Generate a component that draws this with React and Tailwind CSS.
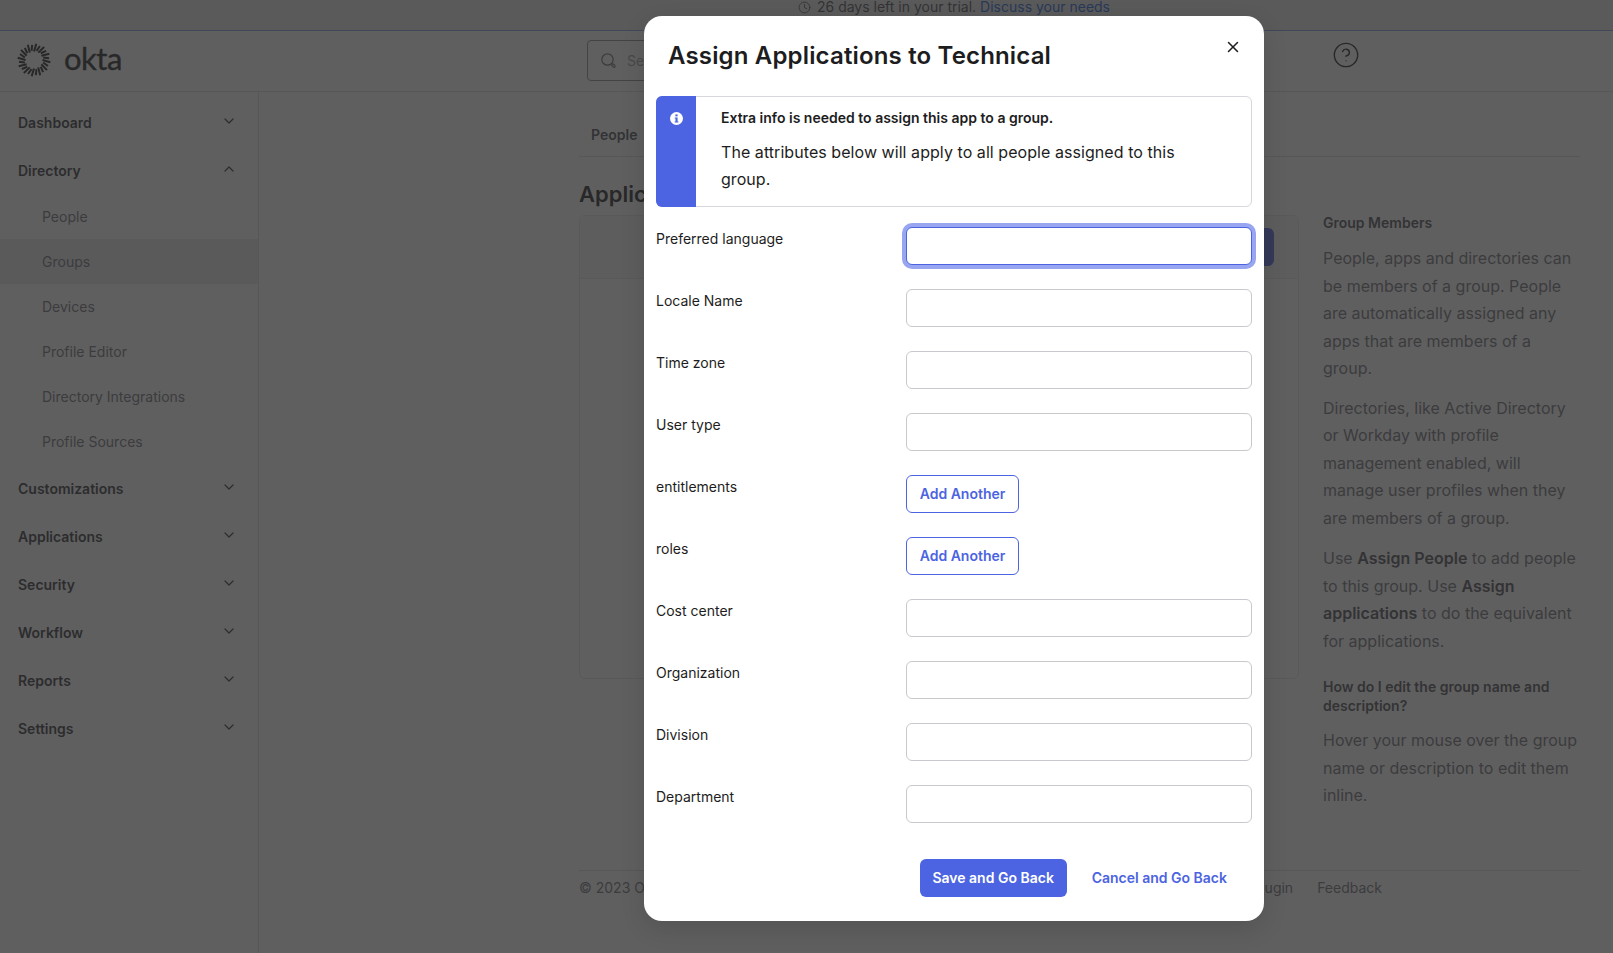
import React from "react";
import { ChevronDown, ChevronUp, X, Clock, CircleHelp } from "lucide-react";

function Burst() {
  const rays = [];
  for (let i = 0; i < 24; i++) {
    const a = (i / 24) * Math.PI * 2;
    const b = a + 0.14;
    const long = i % 2 === 0 ? 16.5 : 15.2;
    const short = i % 2 === 0 ? 8.5 : 9.5;
    rays.push(
      <line key={i} x1={17 + Math.cos(a) * short} y1={17 + Math.sin(a) * short} x2={17 + Math.cos(b) * long} y2={17 + Math.sin(b) * long} stroke="#1d1d21" strokeWidth="2" />
    );
  }
  return <svg width="34" height="34" viewBox="0 0 34 34">{rays}</svg>;
}

function InfoDot() {
  return (
    <svg width="13" height="13" viewBox="0 0 13 13">
      <circle cx="6.5" cy="6.5" r="6.5" fill="#fff" />
      <rect x="5.4" y="2.4" width="2.2" height="2" fill="#4c64e1" />
      <path d="M4.7 5.4h2.9v4h.8v1.2H4.7V9.4h.8V6.6h-.8z" fill="#4c64e1" />
    </svg>
  );
}

function SearchGlyph() {
  return (
    <svg width="18" height="18" viewBox="0 0 18 18" fill="none" stroke="#6e6e78" strokeWidth="1.2">
      <circle cx="7.5" cy="7.5" r="5.7" />
      <ellipse cx="13.4" cy="13.6" rx="1.2" ry="2" transform="rotate(-45 13.4 13.6)" />
    </svg>
  );
}

const TopItem = ({ label, open }) => (
  <div className="flex items-center justify-between h-[48px] pl-[18px] pr-[21px] text-[14px] font-semibold text-[#2f2f35]">
    <span>{label}</span>
    {open ? <ChevronUp size={16} strokeWidth={1.8} className="-mt-[3px]" /> : <ChevronDown size={16} strokeWidth={1.8} className="-mt-[3px]" />}
  </div>
);

const SubItem = ({ label, active }) => (
  <div className={`flex items-center h-[45px] pl-[42px] text-[14px] text-[#6e6e78] ${active ? "bg-[#e9e9ed]" : ""}`}>{label}</div>
);

const Row = ({ label, button, focus }) => (
  <div className="flex h-[62px]">
    <div className="w-[250px] pt-[2px] text-[14px] leading-[20px] text-[#1d1d21]">{label}</div>
    {button ? (
      <button className="h-[38px] w-[113px] rounded-[6px] border border-[#4c64e1] bg-white pb-[2px] text-[14px] font-semibold text-[#4c64e1]">Add Another</button>
    ) : (
      <div className={`h-[38px] w-[346px] rounded-[6px] border bg-white ${focus ? "border-[#4c64e1] ring-4 ring-[#98a5f0]" : "border-[#c9c9cd]"}`} />
    )}
  </div>
);

export default function App() {
  return (
    <div className="relative flex h-[953px] w-[1613px] flex-col overflow-hidden bg-white font-['Inter',sans-serif] text-[#1d1d21]">
      <div className="flex h-[31px] shrink-0 justify-center border-b border-[#1662dd]/50 bg-[#ebebed] pl-[295px] text-[14px] leading-[14px] text-[#4b4b52]">
        <div className="flex h-[14px] items-center gap-[6px]">
          <Clock size={13} strokeWidth={1.6} />
          <span>26 days left in your trial. <span className="text-[#1662dd]">Discuss your needs</span></span>
        </div>
      </div>

      <header className="flex h-[61px] shrink-0 items-center border-b border-[#dcdce0]">
        <div className="-mt-[3px] flex w-[587px] items-center pl-[17px]">
          <Burst />
          <span className="-mt-[2px] ml-[13px] font-['Lato',sans-serif] text-[31px] leading-none tracking-[-0.5px] text-[#1d1d21] [-webkit-text-stroke:0.4px_#1d1d21]">okta</span>
        </div>
        <div className="-mt-[1px] flex h-[41px] w-[400px] items-center rounded-[4px] border border-[#8c8c96] pl-[12px]">
          <SearchGlyph />
          <span className="ml-[9px] text-[14px] text-[#a0a0a8]">Search...</span>
        </div>
        <div className="-mt-[12px] ml-[345px]">
          <CircleHelp size={28} strokeWidth={1.2} className="text-[#1d1d21]" />
        </div>
      </header>

      <div className="flex min-h-0 flex-1">
        <aside className="w-[259px] shrink-0 border-r border-[#dcdce0] pt-[6px]">
          <TopItem label="Dashboard" />
          <TopItem label="Directory" open />
          <div>
            <SubItem label="People" />
            <SubItem label="Groups" active />
            <SubItem label="Devices" />
            <SubItem label="Profile Editor" />
            <SubItem label="Directory Integrations" />
            <SubItem label="Profile Sources" />
          </div>
          <TopItem label="Customizations" />
          <TopItem label="Applications" />
          <TopItem label="Security" />
          <TopItem label="Workflow" />
          <TopItem label="Reports" />
          <TopItem label="Settings" />
        </aside>

        <main className="min-w-0 flex-1 pl-[320px] pr-[33px]">
          <div className="flex h-[65px] items-end border-b border-[#dcdce0] pb-[11px] pl-[12px] text-[14px] font-semibold text-[#4b4b52]">People</div>
          <div className="flex h-[58px] items-center pt-[15px] text-[22px] font-semibold leading-[28px] text-[#1d1d21]">Applications</div>
          <div className="flex h-[655px] items-start">
            <div className="h-[464px] w-[720px] shrink-0 rounded-[6px] border border-[#e4e4e8]">
              <div className="flex h-[63px] items-center justify-end border-b border-[#e4e4e8] bg-[#f4f4f6] pr-[24px]">
                <div className="h-[38px] w-[150px] rounded-[6px] bg-[#4c64e1]" />
              </div>
            </div>
            <div className="-mt-[2px] ml-[24px] w-[257px] text-[16px] leading-[27.5px] text-[#6e6e78]">
              <h3 className="text-[14px] font-semibold leading-[19px] text-[#4b4b52]">Group Members</h3>
              <p className="mt-[13px]">People, apps and directories can be members of a group. People are automatically assigned any apps that are members of a group.</p>
              <p className="mt-[12px]">Directories, like Active Directory or Workday with profile management enabled, will manage user profiles when they are members of a group.</p>
              <p className="mt-[13px]">Use <b className="font-semibold text-[#4b4b52]">Assign People</b> to add people to this group. Use <b className="font-semibold text-[#4b4b52]">Assign applications</b> to do the equivalent for applications.</p>
              <h3 className="mt-[22px] text-[14px] font-semibold leading-[19px] text-[#4b4b52]">How do I edit the group name and description?</h3>
              <p className="mt-[12px]">Hover your mouse over the group name or description to edit them inline.</p>
            </div>
          </div>
          <div className="flex h-[38px] items-start justify-between border-t border-[#dcdce0] pt-[7px] text-[14px] leading-[20px] text-[#6e6e78]">
            <span>© 2023 Okta, Inc.</span>
            <div className="flex gap-[24px] pr-[198px]">
              <span>Download Okta Plugin</span>
              <span>Feedback</span>
            </div>
          </div>
        </main>
      </div>

      <div className="absolute inset-0 bg-[rgba(44,44,44,0.757)]" />

      <div className="absolute left-[644px] top-[16px] h-[905px] w-[620px] rounded-[18px] bg-white px-[12px] shadow-[0_8px_24px_rgba(0,0,0,0.12)]">
        <div className="flex h-[80px] items-start justify-between pl-[12px] pr-[10px]">
          <h2 className="pt-[24px] text-[24px] font-semibold leading-[32px] tracking-[0.16px] text-[#1d1d21]">Assign Applications to Technical</h2>
          <X size={18} strokeWidth={2} className="mt-[22px] text-[#1d1d21]" />
        </div>
        <div className="flex h-[111px] w-[596px] rounded-[6px] border border-[#d7d7dc]">
          <div className="-my-px -ml-px flex w-[40px] shrink-0 justify-center rounded-l-[6px] bg-[#4c64e1] pt-[16px]">
            <InfoDot />
          </div>
          <div className="pl-[25px] pr-[40px] pt-[11px]">
            <p className="text-[14px] font-semibold leading-[20px] text-[#1d1d21]">Extra info is needed to assign this app to a group.</p>
            <p className="mt-[11px] text-[16px] leading-[27px] tracking-[0.06px] text-[#1d1d21]">The attributes below will apply to all people assigned to this group.</p>
          </div>
        </div>
        <div className="mt-[20px] flex flex-col">
          <Row label="Preferred language" focus />
          <Row label="Locale Name" />
          <Row label="Time zone" />
          <Row label="User type" />
          <Row label="entitlements" button />
          <Row label="roles" button />
          <Row label="Cost center" />
          <Row label="Organization" />
          <Row label="Division" />
          <Row label="Department" />
        </div>
        <div className="mt-[12px] flex items-center justify-end gap-[25px] pr-[25px]">
          <button className="h-[38px] w-[147px] rounded-[6px] bg-[#4c64e1] pb-[2px] text-[14px] font-semibold text-white">Save and Go Back</button>
          <span className="-mt-[2px] text-[14px] font-semibold text-[#4c64e1]">Cancel and Go Back</span>
        </div>
      </div>
    </div>
  );
}
